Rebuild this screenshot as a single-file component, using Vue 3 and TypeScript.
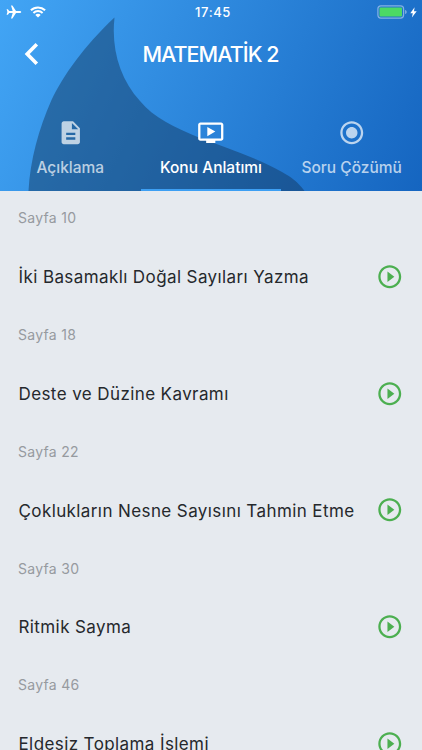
<script setup lang="ts">
interface Lesson {
  page: number
  title: string
}

const lessons: Lesson[] = [
  { page: 10, title: 'İki Basamaklı Doğal Sayıları Yazma' },
  { page: 18, title: 'Deste ve Düzine Kavramı' },
  { page: 22, title: 'Çoklukların Nesne Sayısını Tahmin Etme' },
  { page: 30, title: 'Ritmik Sayma' },
  { page: 46, title: 'Eldesiz Toplama İşlemi' },
]

interface Tab {
  label: string
  icon: string
  active: boolean
}

const tabs: Tab[] = [
  {
    label: 'Açıklama',
    icon: 'M14 2H6c-1.1 0-1.99.9-1.99 2L4 20c0 1.1.89 2 1.99 2H18c1.1 0 2-.9 2-2V8l-6-6zm2 16H8v-2h8v2zm0-4H8v-2h8v2zm-3-5V3.5L18.5 9H13z',
    active: false,
  },
  {
    label: 'Konu Anlatımı',
    icon: 'M21 3H3c-1.11 0-2 .89-2 2v12c0 1.1.89 2 2 2h5v2h8v-2h5c1.1 0 1.99-.9 1.99-2L23 5c0-1.11-.9-2-2-2zm0 14H3V5h18v12zm-5-6l-7 4V7z',
    active: true,
  },
  {
    label: 'Soru Çözümü',
    icon: 'M12 7c-2.76 0-5 2.24-5 5s2.24 5 5 5 5-2.24 5-5-2.24-5-5-5zm0-5C6.48 2 2 6.48 2 12s4.48 10 10 10 10-4.48 10-10S17.52 2 12 2zm0 18c-4.42 0-8-3.58-8-8s3.58-8 8-8 8 3.58 8 8-3.58 8-8 8z',
    active: false,
  },
]
</script>

<template>
  <div class="screen">
    <header class="header">
      <svg class="fin" viewBox="0 0 422 191" aria-hidden="true">
        <path d="M114.500 17.500C84 46 63 76 51.500 100C39 128 30 160 28.500 191H304.500C298 182 291 177 282 172C255 157 229 149 200 138C174 127 154 118 140 101C120 79 111 49 114.500 17.500Z" />
      </svg>

      <div class="status">
        <div class="status-left">
          <svg class="plane" viewBox="0 0 16 14">
            <path d="M15.200 7c0 .7-.8 1-1.700 1H10l-3.600 5.500H5L6.700 8H3.200L1.900 9.800H.6L1.400 7 .6 4.200h1.300L3.200 6h3.500L5 .5h1.400L10 6h3.500c.9 0 1.700.3 1.700 1z" />
          </svg>
          <svg class="wifi" viewBox="0 0 16 12">
            <path class="arc" d="M.9 4.300a10.300 10.300 0 0 1 14.200 0M3.400 6.900a6.700 6.700 0 0 1 9.200 0" />
            <path d="M8 7.800c1.100 0 2 .4 2.700 1.100L8 11.600 5.300 8.900C6 8.200 6.900 7.800 8 7.800z" />
          </svg>
        </div>
        <span class="time">17:45</span>
        <div class="status-right">
          <svg class="battery" viewBox="0 0 30 14">
            <rect class="shell" x=".9" y=".9" width="25.700" height="12.200" rx="3" />
            <rect class="charge" x="2.500" y="2.600" width="22.500" height="8.800" rx="1" />
            <path class="cap" d="M28.200 5c1 .4 1.400 1.100 1.400 2s-.4 1.600-1.400 2z" />
          </svg>
          <svg class="bolt" viewBox="0 0 7 11">
            <path d="M4.600.2.300 6.200h2.500L1.900 10.600 6.700 4.300H4z" />
          </svg>
        </div>
      </div>

      <div class="toolbar">
        <button class="back" type="button" aria-label="Geri">
          <svg viewBox="0 0 16 24"><path d="M12.800 2.300 3.200 12l9.600 9.700" /></svg>
        </button>
        <h1 class="title">MATEMATİK 2</h1>
      </div>

      <nav class="tabs">
        <button
          v-for="tab in tabs"
          :key="tab.label"
          type="button"
          class="tab"
          :class="{ active: tab.active }"
        >
          <svg class="tab-icon" viewBox="0 0 24 24"><path :d="tab.icon" /></svg>
          <span class="tab-label">{{ tab.label }}</span>
        </button>
      </nav>
    </header>

    <main class="list">
      <section v-for="lesson in lessons" :key="lesson.page" class="lesson">
        <div class="page">Sayfa {{ lesson.page }}</div>
        <div class="row">
          <span class="name">{{ lesson.title }}</span>
          <svg class="play" viewBox="0 0 24 24">
            <path d="M10 16.500l6-4.500-6-4.500v9zM12 2C6.480 2 2 6.480 2 12s4.480 10 10 10 10-4.480 10-10S17.520 2 12 2zm0 18c-4.410 0-8-3.590-8-8s3.590-8 8-8 8 3.590 8 8-3.590 8-8 8z" />
          </svg>
        </div>
      </section>
    </main>
  </div>
</template>

<style>
body {
  margin: 0;
  overflow: hidden;
}
</style>

<style scoped>
.screen {
  display: flex;
  flex-direction: column;
  height: 750px;
  overflow: hidden;
  background: #e6eaef;
  font-family: Inter, "Liberation Sans", sans-serif;
}
.header {
  position: relative;
  display: flex;
  flex-direction: column;
  flex: none;
  height: 191px;
  background: linear-gradient(114.400deg, #42a5f5, #1565c0);
  color: #fff;
}
.fin {
  position: absolute;
  inset: 0;
  width: 100%;
  height: 100%;
  fill: rgba(18, 52, 86, 0.45);
}
.status,
.toolbar,
.tabs {
  position: relative;
}
.status {
  display: grid;
  grid-template-columns: 1fr auto 1fr;
  align-items: center;
  height: 24px;
  padding: 0 5px 0 6px;
}
.status svg {
  display: block;
  fill: #fff;
}
.status-left,
.status-right {
  display: flex;
  align-items: center;
}
.status-left {
  gap: 8px;
}
.status-right {
  justify-content: flex-end;
  gap: 3px;
}
.plane {
  width: 16px;
  height: 14px;
}
.wifi {
  width: 16px;
  height: 12px;
}
.wifi .arc {
  fill: none;
  stroke: #fff;
  stroke-width: 2;
}
.time {
  padding-left: 3px;
  font-size: 13px;
  font-weight: 500;
  letter-spacing: 0.600px;
}
.battery {
  width: 30px;
  height: 14px;
}
.battery .shell {
  fill: none;
  stroke: rgba(255, 255, 255, 0.45);
  stroke-width: 1.200;
}
.battery .charge {
  fill: #4cd964;
}
.battery .cap {
  fill: rgba(255, 255, 255, 0.5);
}
.bolt {
  width: 7px;
  height: 11px;
}
.toolbar {
  display: grid;
  grid-template-columns: 64px 1fr 64px;
  align-items: center;
  height: 60px;
}
button {
  padding: 0;
  border: 0;
  background: none;
  color: inherit;
  font: inherit;
}
.back {
  display: flex;
  justify-content: center;
}
.back svg {
  width: 16px;
  height: 24px;
  fill: none;
  stroke: #fff;
  stroke-width: 3.600;
}
.title {
  margin: 0;
  padding-right: 1px;
  text-align: center;
  white-space: nowrap;
  font-size: 21.500px;
  line-height: 26px;
  font-weight: 500;
  letter-spacing: -0.950px;
}
.tabs {
  display: grid;
  grid-template-columns: repeat(3, 1fr);
  height: 107px;
}
.tab {
  display: flex;
  flex-direction: column;
  align-items: center;
  box-sizing: border-box;
  padding-top: 35px;
  border-bottom: 2px solid transparent;
  color: rgba(255, 255, 255, 0.7);
}
.tab.active {
  color: #fff;
  border-bottom-color: #3d9ff3;
}
.tab-icon {
  width: 27.500px;
  height: 27.500px;
  fill: currentColor;
}
.tab-label {
  margin-top: 11.500px;
  font-size: 15.500px;
  line-height: 20px;
  font-weight: 500;
  white-space: nowrap;
}
.page {
  padding-left: 18px;
  height: 53px;
  line-height: 53px;
  font-size: 14px;
  letter-spacing: 0.300px;
  color: #969a9f;
}
.row {
  display: flex;
  align-items: center;
  justify-content: space-between;
  height: 63.850px;
  padding: 0 18.500px;
}
.name {
  padding-top: 2px;
  font-size: 17px;
  letter-spacing: 0.400px;
  color: #25282c;
  white-space: nowrap;
}
.play {
  margin-top: 1px;
  width: 27.500px;
  height: 27.500px;
  fill: #4caf50;
}
</style>
